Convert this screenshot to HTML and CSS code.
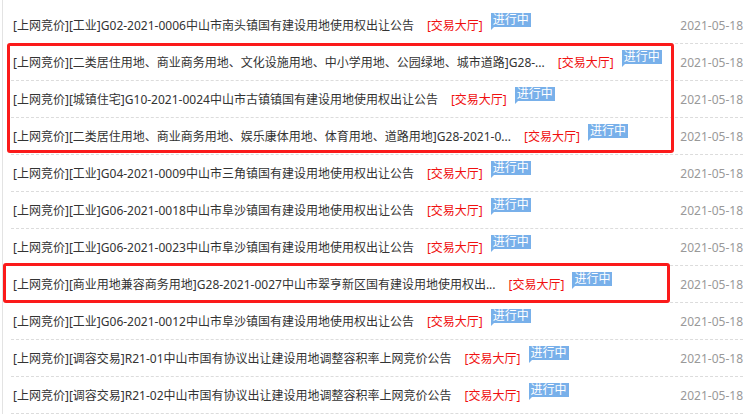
FILE: index.html
```html
<!DOCTYPE html>
<html lang="zh-CN">
    <head>
        <meta charset="UTF-8">
        <meta name="viewport" content="width=device-width, initial-scale=1.0">
        <title>交易公告</title>
        <link rel="stylesheet" href="styles.css">
    </head>
    <body>
        <ul class="notice-list">
            <li class="notice">
                <a class="title" href="#">[上网竞价][工业]G02-2021-0006中山市南头镇国有建设用地使用权出让公告</a>
                <span class="hall">[交易大厅]</span>
                <span class="tag">进行中</span>
                <span class="date">2021-05-18</span>
            </li>
            <li class="notice">
                <a class="title" href="#">[上网竞价][二类居住用地、商业商务用地、文化设施用地、中小学用地、公园绿地、城市道路]G28-...</a>
                <span class="hall">[交易大厅]</span>
                <span class="tag">进行中</span>
                <span class="date">2021-05-18</span>
            </li>
            <li class="notice">
                <a class="title" href="#">[上网竞价][城镇住宅]G10-2021-0024中山市古镇镇国有建设用地使用权出让公告</a>
                <span class="hall">[交易大厅]</span>
                <span class="tag">进行中</span>
                <span class="date">2021-05-18</span>
            </li>
            <li class="notice">
                <a class="title" href="#">[上网竞价][二类居住用地、商业商务用地、娱乐康体用地、体育用地、道路用地]G28-2021-0...</a>
                <span class="hall">[交易大厅]</span>
                <span class="tag">进行中</span>
                <span class="date">2021-05-18</span>
            </li>
            <li class="notice">
                <a class="title" href="#">[上网竞价][工业]G04-2021-0009中山市三角镇国有建设用地使用权出让公告</a>
                <span class="hall">[交易大厅]</span>
                <span class="tag">进行中</span>
                <span class="date">2021-05-18</span>
            </li>
            <li class="notice">
                <a class="title" href="#">[上网竞价][工业]G06-2021-0018中山市阜沙镇国有建设用地使用权出让公告</a>
                <span class="hall">[交易大厅]</span>
                <span class="tag">进行中</span>
                <span class="date">2021-05-18</span>
            </li>
            <li class="notice">
                <a class="title" href="#">[上网竞价][工业]G06-2021-0023中山市阜沙镇国有建设用地使用权出让公告</a>
                <span class="hall">[交易大厅]</span>
                <span class="tag">进行中</span>
                <span class="date">2021-05-18</span>
            </li>
            <li class="notice">
                <a class="title" href="#">[上网竞价][商业用地兼容商务用地]G28-2021-0027中山市翠亨新区国有建设用地使用权出...</a>
                <span class="hall">[交易大厅]</span>
                <span class="tag">进行中</span>
                <span class="date">2021-05-18</span>
            </li>
            <li class="notice">
                <a class="title" href="#">[上网竞价][工业]G06-2021-0012中山市阜沙镇国有建设用地使用权出让公告</a>
                <span class="hall">[交易大厅]</span>
                <span class="tag">进行中</span>
                <span class="date">2021-05-18</span>
            </li>
            <li class="notice">
                <a class="title" href="#">[上网竞价][调容交易]R21-01中山市国有协议出让建设用地调整容积率上网竞价公告</a>
                <span class="hall">[交易大厅]</span>
                <span class="tag">进行中</span>
                <span class="date">2021-05-18</span>
            </li>
            <li class="notice">
                <a class="title" href="#">[上网竞价][调容交易]R21-02中山市国有协议出让建设用地调整容积率上网竞价公告</a>
                <span class="hall">[交易大厅]</span>
                <span class="tag">进行中</span>
                <span class="date">2021-05-18</span>
            </li>
        </ul>

        <!-- annotation marks drawn over the list -->
        <div class="mark mark-top"></div>
        <div class="mark mark-bottom"></div>
    </body>
</html>
```

FILE: styles.css
```css
body {
    margin: 0;
    background-color: #fff;
    font-family: "Noto Sans", "Noto Sans CJK SC", sans-serif;
    font-size: 12px;
    overflow: hidden;
}

.notice-list {
    list-style: none;
    margin: 0 0 0 2px;
    padding: 7px 0 0 0;
    height: 414px;
    box-sizing: border-box;
    border-left: 1px solid #e3e3e3;
}

.notice {
    display: flex;
    align-items: center;
    height: 36px;
    margin: 0 10px 0 8px;
    padding-left: 2px;
    border-bottom: 1px dashed #dcdcdc;
    white-space: nowrap;
}

.title {
    color: #333;
    text-decoration: none;
}

.hall {
    color: #f01010;
    margin-left: 13px;
}

.tag {
    position: relative;
    align-self: flex-start;
    margin-top: 6px;
    margin-left: 8px;
    padding: 0 2px;
    line-height: 14px;
    color: #fff;
    background-color: #78b0ea;
}

.tag::after {
    content: "";
    position: absolute;
    left: 0;
    bottom: -3px;
    border-top: 3px solid #78b0ea;
    border-right: 3px solid transparent;
}

.date {
    margin-left: auto;
    color: #999;
}

.mark {
    position: absolute;
    border: 3px solid #fb1a1a;
    border-radius: 3px;
}

.mark-top {
    left: 7px;
    top: 43px;
    width: 661px;
    height: 104px;
}

.mark-bottom {
    left: 3px;
    top: 263px;
    width: 661px;
    height: 34px;
}
```
